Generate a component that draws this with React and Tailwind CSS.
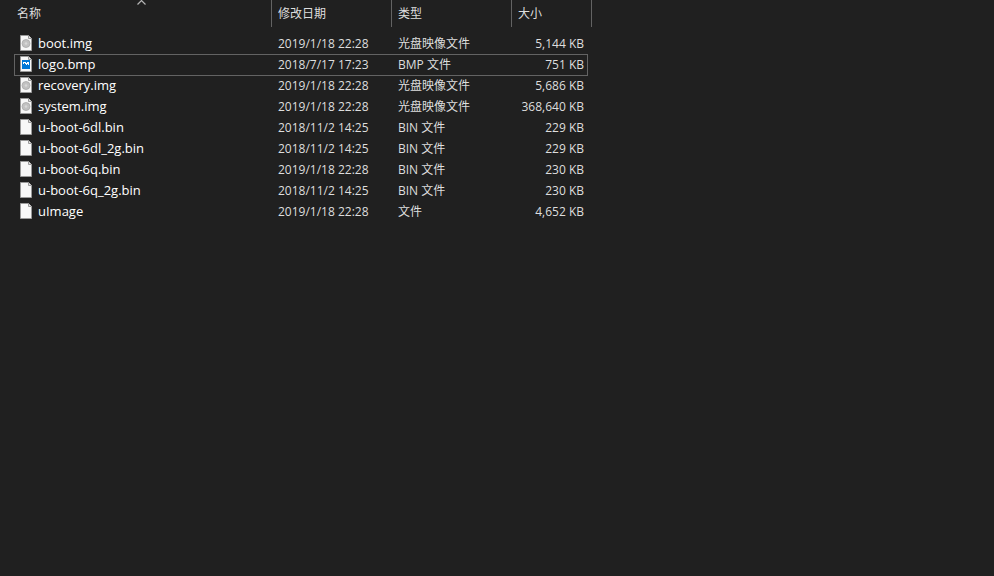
const FILES = [
  { name: 'boot.img', date: '2019/1/18 22:28', type: '光盘映像文件', size: '5,144 KB', kind: 'disc' },
  { name: 'logo.bmp', date: '2018/7/17 17:23', type: 'BMP 文件', size: '751 KB', kind: 'image', focused: true },
  { name: 'recovery.img', date: '2019/1/18 22:28', type: '光盘映像文件', size: '5,686 KB', kind: 'disc' },
  { name: 'system.img', date: '2019/1/18 22:28', type: '光盘映像文件', size: '368,640 KB', kind: 'disc' },
  { name: 'u-boot-6dl.bin', date: '2018/11/2 14:25', type: 'BIN 文件', size: '229 KB', kind: 'blank' },
  { name: 'u-boot-6dl_2g.bin', date: '2018/11/2 14:25', type: 'BIN 文件', size: '229 KB', kind: 'blank' },
  { name: 'u-boot-6q.bin', date: '2019/1/18 22:28', type: 'BIN 文件', size: '230 KB', kind: 'blank' },
  { name: 'u-boot-6q_2g.bin', date: '2018/11/2 14:25', type: 'BIN 文件', size: '230 KB', kind: 'blank' },
  { name: 'uImage', date: '2019/1/18 22:28', type: '文件', size: '4,652 KB', kind: 'blank' },
];

const COLUMNS = ['名称', '修改日期', '类型', '大小'];

function FileIcon({ kind }) {
  return (
    <svg className="h-4 w-4 shrink-0" viewBox="0 0 16 16" aria-hidden="true">
      <path d="M2.5 .5h8l3 3v12h-11z" fill="#f8f8f8" stroke="#9a9a9a" />
      <path d="M10.5 .5v3h3" fill="#e4e4e4" stroke="#9a9a9a" />
      {kind === 'disc' && (
        <>
          <circle cx="8" cy="8.5" r="4" fill="#c2c2c2" stroke="#a8a8a8" strokeWidth=".8" />
          <circle cx="8" cy="8.5" r="1.3" fill="#d8d8d8" />
        </>
      )}
      {kind === 'image' && (
        <>
          <path d="M4 4h8v9H4z" fill="#0078d7" />
          <path d="M5 6h3v1h1V6h2v3h-1V8H9v1H8V8H7V7H6v1H5z" fill="#fff" />
        </>
      )}
    </svg>
  );
}

export default function App() {
  return (
    <main className="min-h-screen bg-[#202020] pl-[14px] font-['Open_Sans','Noto_Sans_CJK_SC',sans-serif] text-[12px] leading-[22px] text-[#dedede]">
      <table className="block">
        <thead className="block pb-[6px]">
          <tr className="grid h-[27px] grid-cols-[258px_120px_120px_80px]">
            {COLUMNS.map((label, i) => (
              <th
                key={label}
                scope="col"
                aria-sort={i === 0 ? 'ascending' : undefined}
                className={`relative border-r border-[#636363] text-left font-normal ${i === 0 ? 'pl-[3px]' : 'pl-[6px]'}`}
              >
                <button type="button" className="flex h-full w-full items-center">{label}</button>
                {i === 0 && (
                  <svg className="absolute top-0 left-[123px] h-[5px] w-[9px]" viewBox="0 0 9 5" aria-hidden="true">
                    <path d="M.5 4.5l4-4 4 4" fill="none" stroke="#b4b4b4" strokeWidth="1.2" />
                  </svg>
                )}
              </th>
            ))}
          </tr>
        </thead>
        <tbody className="block">
          {FILES.map((file) => (
            <tr
              key={file.name}
              className={`relative grid h-[21px] w-[574px] grid-cols-[258px_120px_120px_76px] items-start ${
                file.focused ? "after:pointer-events-none after:absolute after:inset-0 after:-bottom-px after:border after:border-[#636363] after:content-['']" : ''
              }`}
            >
              <td className="flex items-center gap-1 pl-1 text-[13px] leading-[20px] text-white">
                <FileIcon kind={file.kind} />
                {file.name}
              </td>
              <td className="pl-[6px]">{file.date}</td>
              <td className="pl-[6px]">{file.type}</td>
              <td className="pr-[4px] text-right">{file.size}</td>
            </tr>
          ))}
        </tbody>
      </table>
    </main>
  );
}
